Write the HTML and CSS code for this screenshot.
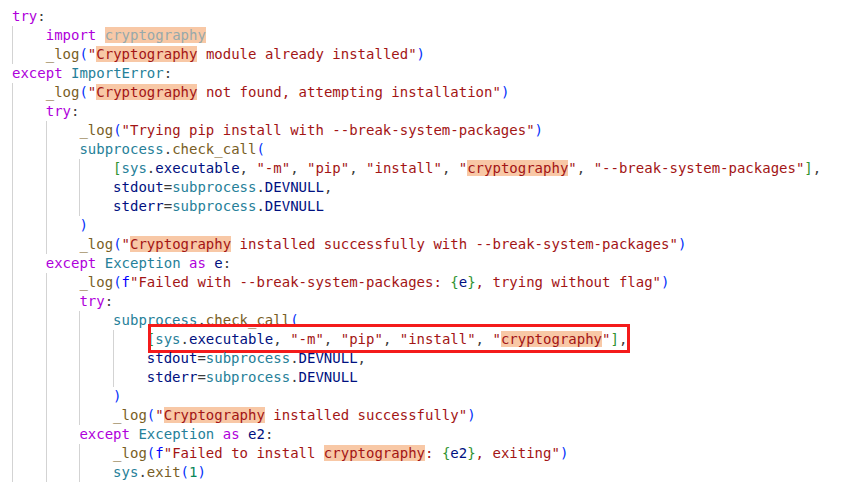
FILE: index.html
```html
<!DOCTYPE html>
<html>
<head>
<meta charset="utf-8">
<link rel="stylesheet" href="styles.css">
</head>
<body>
<div class="editor">
<div class="line"><span class="k">try</span><span class="d">:</span></div>
<div class="line"><span class="ind"></span><span class="k">import</span> <span class="hl faded">cryptography</span></div>
<div class="line"><span class="ind"></span><span class="f">_log</span><span class="p1">(</span><span class="s">"<span class="hl">Cryptography</span> module already installed"</span><span class="p1">)</span></div>
<div class="line"><span class="k">except</span> <span class="c">ImportError</span><span class="d">:</span></div>
<div class="line"><span class="ind"></span><span class="f">_log</span><span class="p1">(</span><span class="s">"<span class="hl">Cryptography</span> not found, attempting installation"</span><span class="p1">)</span></div>
<div class="line"><span class="ind"></span><span class="k">try</span><span class="d">:</span></div>
<div class="line"><span class="ind"></span><span class="ind"></span><span class="f">_log</span><span class="p1">(</span><span class="s">"Trying pip install with --break-system-packages"</span><span class="p1">)</span></div>
<div class="line"><span class="ind"></span><span class="ind"></span><span class="c">subprocess</span><span class="d">.</span><span class="f">check_call</span><span class="p1">(</span></div>
<div class="line"><span class="ind"></span><span class="ind"></span><span class="ind"></span><span class="p2">[</span><span class="c">sys</span><span class="d">.</span><span class="v">executable</span><span class="d">, </span><span class="s">"-m"</span><span class="d">, </span><span class="s">"pip"</span><span class="d">, </span><span class="s">"install"</span><span class="d">, </span><span class="s">"<span class="hl">cryptography</span>"</span><span class="d">, </span><span class="s">"--break-system-packages"</span><span class="p2">]</span><span class="d">,</span></div>
<div class="line"><span class="ind"></span><span class="ind"></span><span class="ind"></span><span class="v">stdout</span><span class="d">=</span><span class="c">subprocess</span><span class="d">.</span><span class="v">DEVNULL</span><span class="d">,</span></div>
<div class="line"><span class="ind"></span><span class="ind"></span><span class="ind"></span><span class="v">stderr</span><span class="d">=</span><span class="c">subprocess</span><span class="d">.</span><span class="v">DEVNULL</span></div>
<div class="line"><span class="ind"></span><span class="ind"></span><span class="p1">)</span></div>
<div class="line"><span class="ind"></span><span class="ind"></span><span class="f">_log</span><span class="p1">(</span><span class="s">"<span class="hl">Cryptography</span> installed successfully with --break-system-packages"</span><span class="p1">)</span></div>
<div class="line"><span class="ind"></span><span class="k">except</span> <span class="c">Exception</span> <span class="k">as</span> <span class="v">e</span><span class="d">:</span></div>
<div class="line"><span class="ind"></span><span class="ind"></span><span class="f">_log</span><span class="p1">(</span><span class="fp">f</span><span class="s">"Failed with --break-system-packages: </span><span class="p2">{</span><span class="v">e</span><span class="p2">}</span><span class="s">, trying without flag"</span><span class="p1">)</span></div>
<div class="line"><span class="ind"></span><span class="ind"></span><span class="k">try</span><span class="d">:</span></div>
<div class="line"><span class="ind"></span><span class="ind"></span><span class="ind"></span><span class="c">subprocess</span><span class="d">.</span><span class="f">check_call</span><span class="p1">(</span></div>
<div class="line marked"><span class="ind"></span><span class="ind"></span><span class="ind"></span><span class="ind"></span><span class="p2">[</span><span class="c">sys</span><span class="d">.</span><span class="v">executable</span><span class="d">, </span><span class="s">"-m"</span><span class="d">, </span><span class="s">"pip"</span><span class="d">, </span><span class="s">"install"</span><span class="d">, </span><span class="s">"<span class="hl">cryptography</span>"</span><span class="p2">]</span><span class="d">,</span><span class="redbox"></span></div>
<div class="line"><span class="ind"></span><span class="ind"></span><span class="ind"></span><span class="ind"></span><span class="v">stdout</span><span class="d">=</span><span class="c">subprocess</span><span class="d">.</span><span class="v">DEVNULL</span><span class="d">,</span></div>
<div class="line"><span class="ind"></span><span class="ind"></span><span class="ind"></span><span class="ind"></span><span class="v">stderr</span><span class="d">=</span><span class="c">subprocess</span><span class="d">.</span><span class="v">DEVNULL</span></div>
<div class="line"><span class="ind"></span><span class="ind"></span><span class="ind"></span><span class="p1">)</span></div>
<div class="line"><span class="ind"></span><span class="ind"></span><span class="ind"></span><span class="f">_log</span><span class="p1">(</span><span class="s">"<span class="hl">Cryptography</span> installed successfully"</span><span class="p1">)</span></div>
<div class="line"><span class="ind"></span><span class="ind"></span><span class="k">except</span> <span class="c">Exception</span> <span class="k">as</span> <span class="v">e2</span><span class="d">:</span></div>
<div class="line"><span class="ind"></span><span class="ind"></span><span class="ind"></span><span class="f">_log</span><span class="p1">(</span><span class="fp">f</span><span class="s">"Failed to install <span class="hl">cryptography</span>: </span><span class="p2">{</span><span class="v">e2</span><span class="p2">}</span><span class="s">, exiting"</span><span class="p1">)</span></div>
<div class="line"><span class="ind"></span><span class="ind"></span><span class="ind"></span><span class="c">sys</span><span class="d">.</span><span class="f">exit</span><span class="p1">(</span><span class="n">1</span><span class="p1">)</span></div>
</div>
</body>
</html>
```
FILE: styles.css
```css
html, body {
  margin: 0;
  padding: 0;
  background: #ffffff;
}
.editor {
  padding: 7px 0 0 12px;
  font-family: "DejaVu Sans Mono", monospace;
  font-size: 14px;
  line-height: 19px;
  color: #3b3b3b;
}
.line {
  display: block;
  height: 19px;
  white-space: pre;
  position: relative;
}
.ind {
  display: inline-block;
  vertical-align: top;
  width: 4ch;
  height: 19px;
  box-sizing: border-box;
  border-left: 1px solid #d3d3d3;
}
.k { color: #af00db; }
.c { color: #267f99; }
.f { color: #795e26; }
.s { color: #a31515; }
.v { color: #001080; }
.n { color: #098658; }
.fp { color: #0000ff; }
.d { color: #3b3b3b; }
.p1 { color: #0431fa; }
.p2 { color: #319331; }
.hl { background: #f8c8a6; }
.faded { color: #97a9ab; }
.redbox {
  position: absolute;
  left: 136px;
  top: -6px;
  width: 482px;
  height: 29px;
  box-sizing: border-box;
  border: 3px solid #f41b1b;
}
```
